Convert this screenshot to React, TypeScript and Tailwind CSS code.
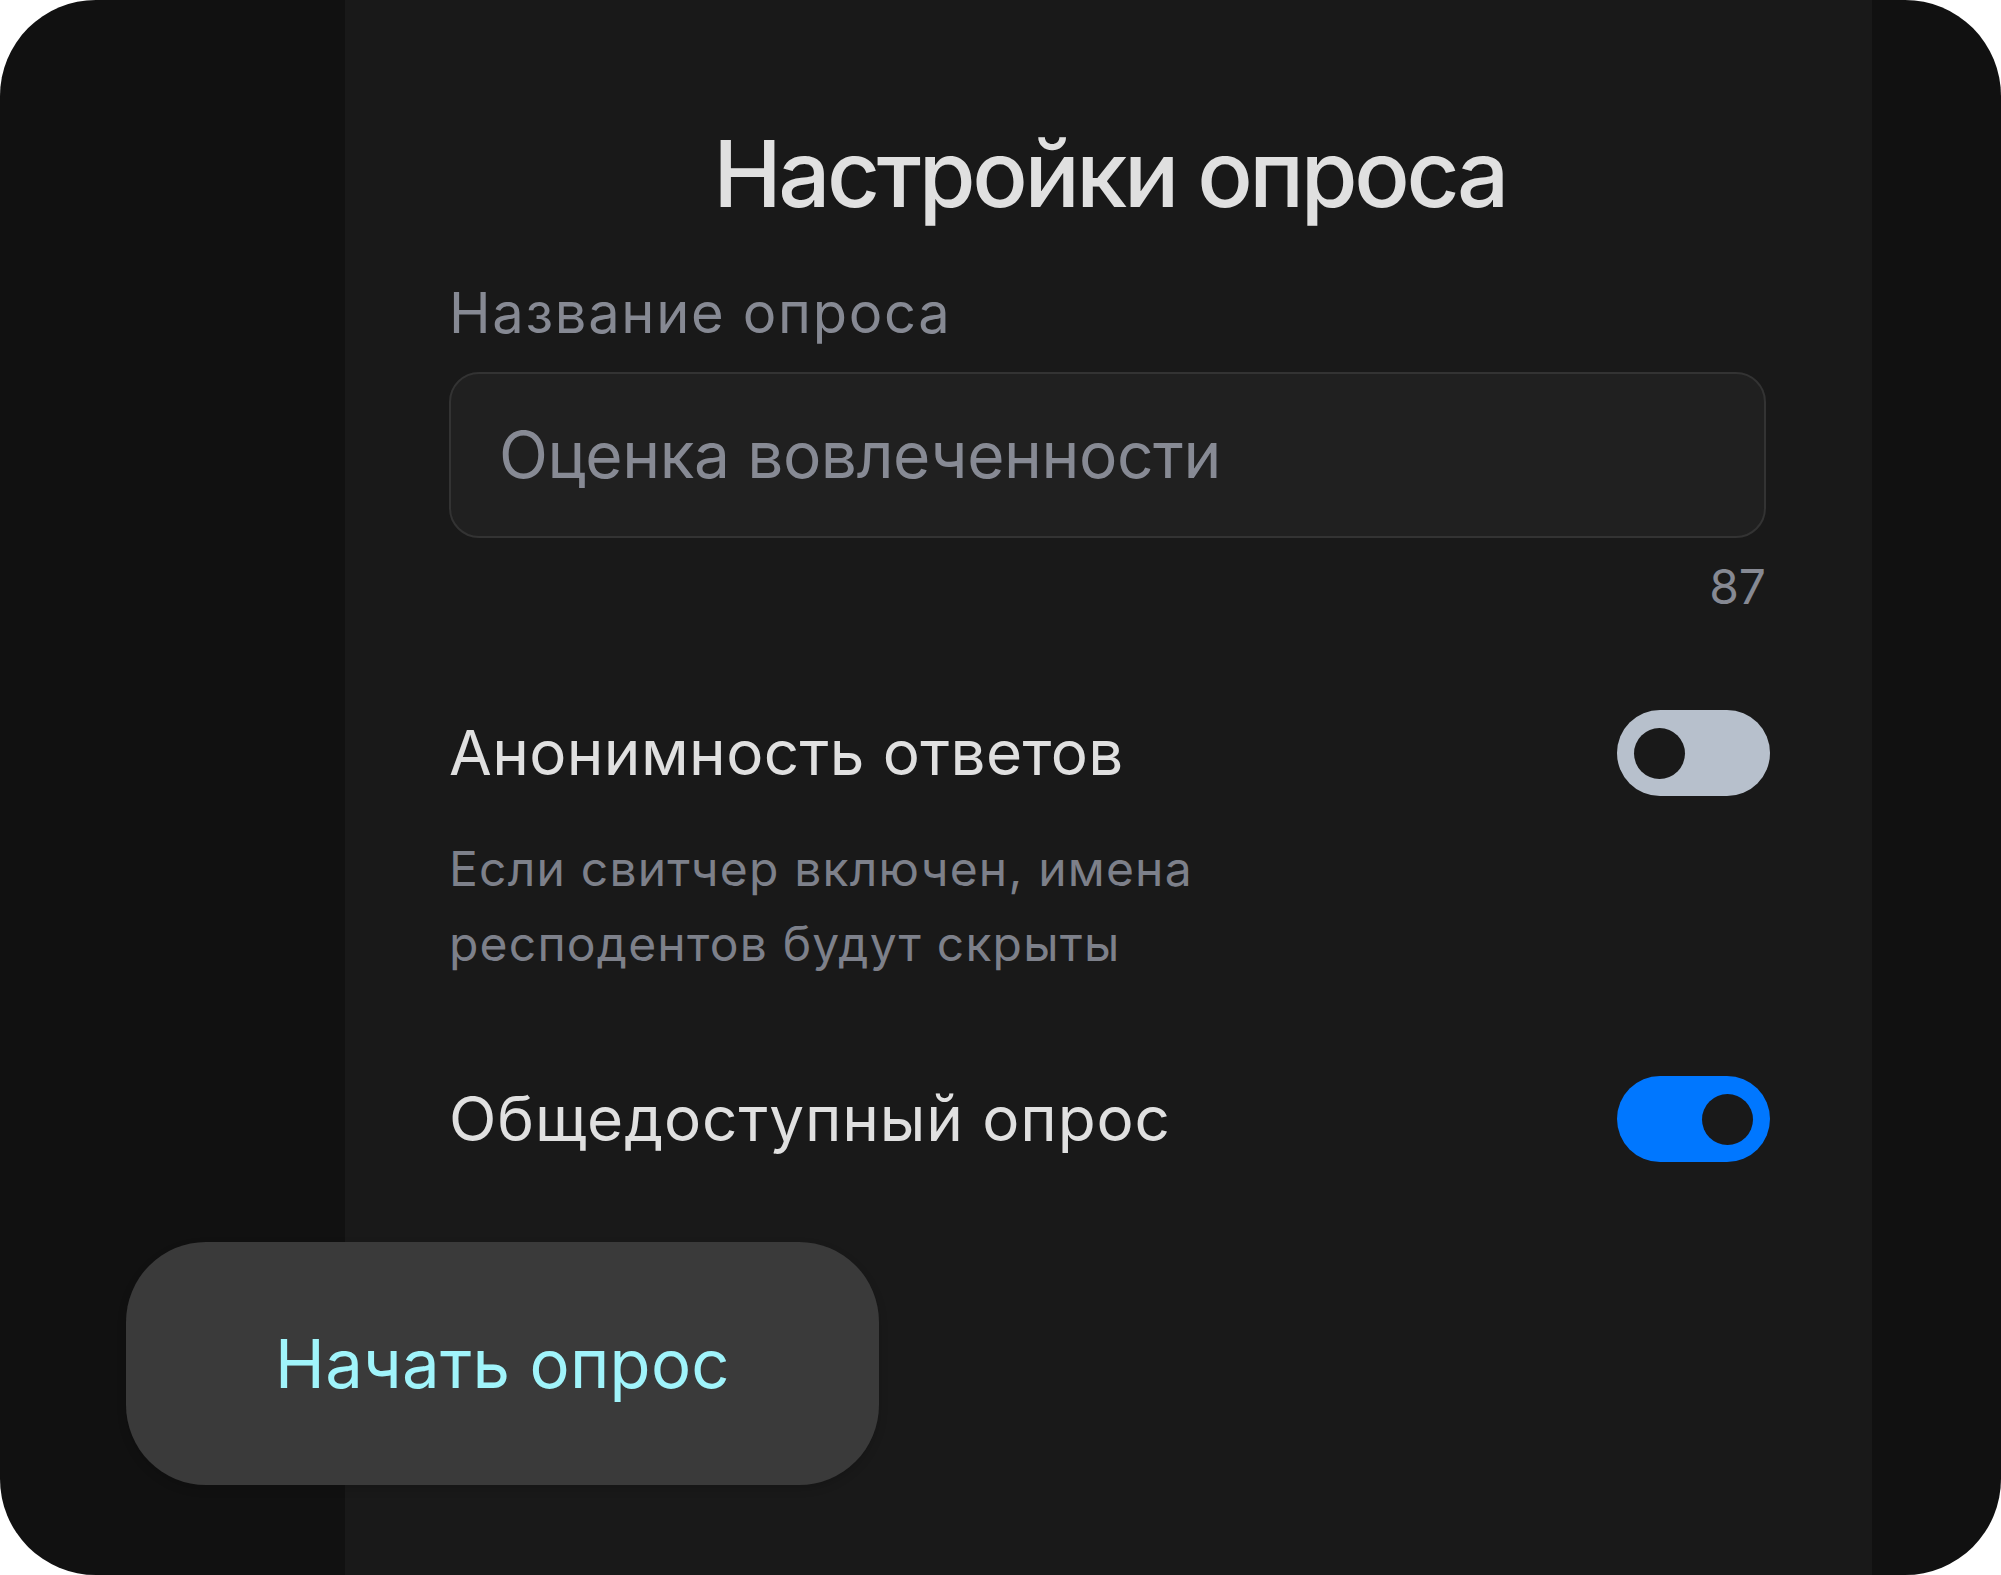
import React from "react";

function Toggle({ on }: { on: boolean }) {
  return (
    <div
      className={
        on
          ? "flex h-[86px] w-[153px] shrink-0 items-center justify-end rounded-full bg-[#0077ff] px-[17px]"
          : "flex h-[86px] w-[153px] shrink-0 items-center justify-start rounded-full bg-[#b7c0cc] px-[17px]"
      }
    >
      <div className="h-[51px] w-[51px] rounded-full bg-[#191919]" />
    </div>
  );
}

export default function App() {
  return (
    <div className="relative flex h-[1575px] w-[2001px] overflow-hidden rounded-[96px] bg-[#111111] font-['Inter',sans-serif]">
      <div className="w-[345px] shrink-0" />
      <div className="flex w-[1527px] shrink-0 flex-col bg-[#191919] pl-[104px] pr-[102px] pt-[128px]">
        <h1 className="text-center text-[92px] font-medium leading-[92px] tracking-[-3.4px] text-[#e0e0e0]">
          Настройки опроса
        </h1>
        <div className="mt-[65px] text-[56px] leading-[56px] tracking-[1.7px] text-[#868993]">Название опроса</div>
        <div className="mt-[31px] flex h-[166px] w-[1317px] items-center rounded-[30px] border-2 border-[#333333] bg-[#202020] px-[48px]">
          <span className="text-[64px] leading-[64px] tracking-[-0.4px] text-[#878a94]">Оценка вовлеченности</span>
        </div>
        <div className="mt-[25px] w-[1317px] text-right text-[48px] leading-[48px] text-[#868993]">87</div>
        <div className="mt-[99px] flex items-center justify-between">
          <span className="text-[62px] leading-[62px] tracking-[0.4px] text-[#e0e0e0]">Анонимность ответов</span>
          <Toggle on={false} />
        </div>
        <div className="mt-[35px] text-[48px] leading-[75px] tracking-[1.2px] text-[#7d808a]">
          Если свитчер включен, имена
          <br />
          респодентов будут скрыты
        </div>
        <div className="mt-[95px] flex items-center justify-between">
          <span className="text-[62px] leading-[62px] tracking-[0.9px] text-[#e0e0e0]">Общедоступный опрос</span>
          <Toggle on={true} />
        </div>
      </div>
      <div className="flex-1" />
      <button className="absolute left-[126px] top-[1242px] flex h-[243px] w-[753px] items-center justify-center rounded-[80px] bg-[#3a3a3a] shadow-[0_4px_10px_rgba(0,0,0,0.15)]">
        <span className="text-[67px] leading-[67px] tracking-[0.3px] text-[#a0f4fb]">Начать опрос</span>
      </button>
    </div>
  );
}
